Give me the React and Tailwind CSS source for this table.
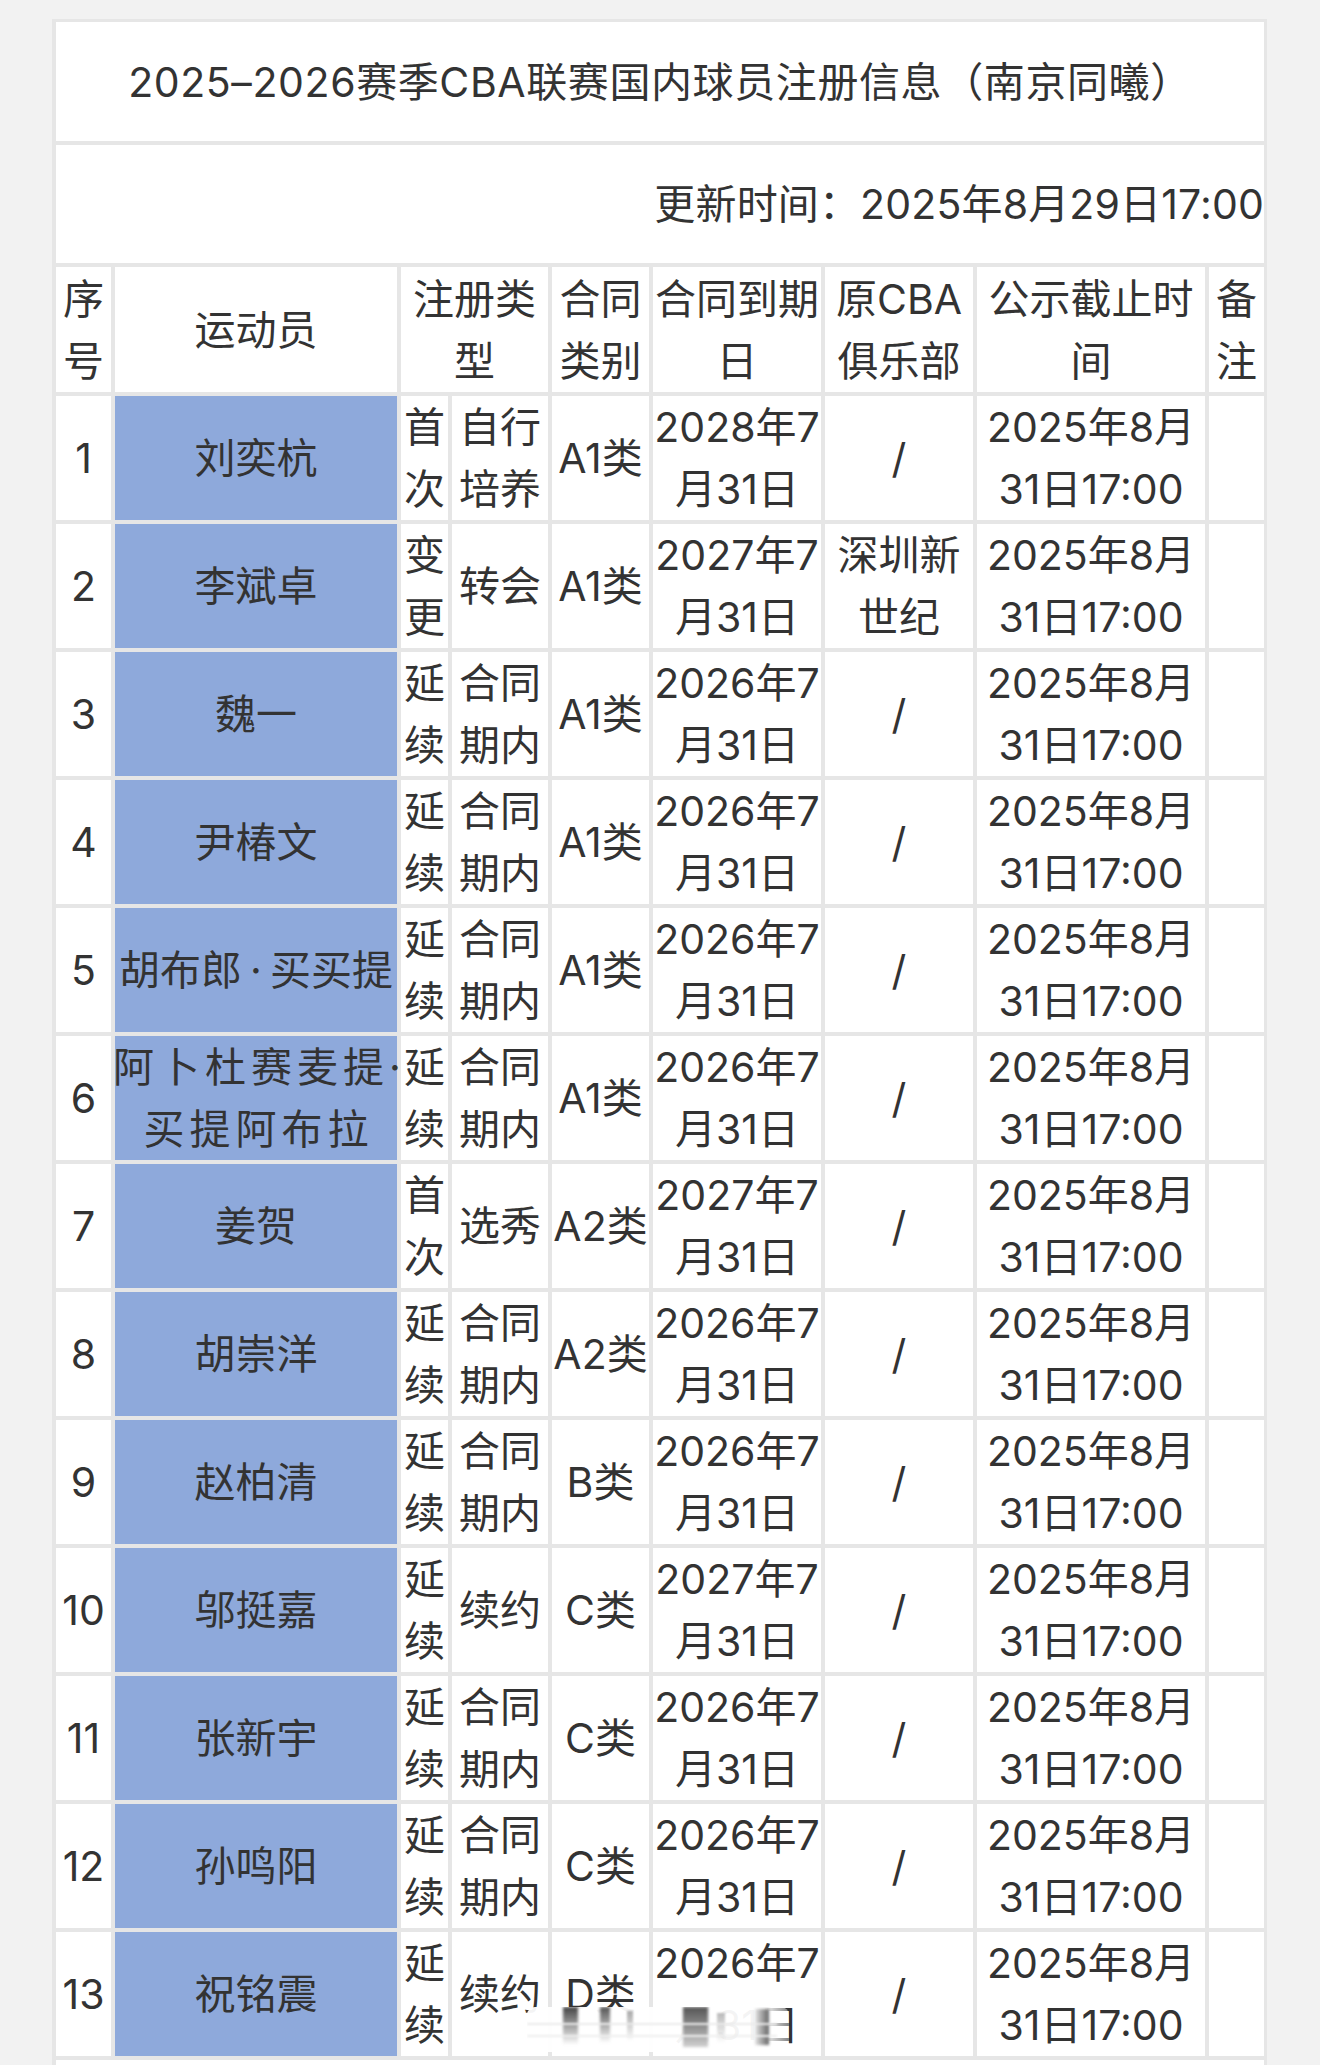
import React from "react";

const GRID =
  "grid grid-cols-[55px_282px_47px_96px_97px_168px_148px_228px_55px] gap-[4px]";

const D1 = ["2025年8月", "31日17:00"];

const rows = [
  { n: "1", name: ["刘奕杭"], a: ["首", "次"], b: ["自行", "培养"], c: "A1类", d: ["2028年7", "月31日"], e: ["/"] },
  { n: "2", name: ["李斌卓"], a: ["变", "更"], b: ["转会"], c: "A1类", d: ["2027年7", "月31日"], e: ["深圳新", "世纪"] },
  { n: "3", name: ["魏一"], a: ["延", "续"], b: ["合同", "期内"], c: "A1类", d: ["2026年7", "月31日"], e: ["/"] },
  { n: "4", name: ["尹椿文"], a: ["延", "续"], b: ["合同", "期内"], c: "A1类", d: ["2026年7", "月31日"], e: ["/"] },
  { n: "5", name: "dot5", a: ["延", "续"], b: ["合同", "期内"], c: "A1类", d: ["2026年7", "月31日"], e: ["/"] },
  { n: "6", name: "dot6", a: ["延", "续"], b: ["合同", "期内"], c: "A1类", d: ["2026年7", "月31日"], e: ["/"] },
  { n: "7", name: ["姜贺"], a: ["首", "次"], b: ["选秀"], c: "A2类", d: ["2027年7", "月31日"], e: ["/"] },
  { n: "8", name: ["胡崇洋"], a: ["延", "续"], b: ["合同", "期内"], c: "A2类", d: ["2026年7", "月31日"], e: ["/"] },
  { n: "9", name: ["赵柏清"], a: ["延", "续"], b: ["合同", "期内"], c: "B类", d: ["2026年7", "月31日"], e: ["/"] },
  { n: "10", name: ["邬挺嘉"], a: ["延", "续"], b: ["续约"], c: "C类", d: ["2027年7", "月31日"], e: ["/"] },
  { n: "11", name: ["张新宇"], a: ["延", "续"], b: ["合同", "期内"], c: "C类", d: ["2026年7", "月31日"], e: ["/"] },
  { n: "12", name: ["孙鸣阳"], a: ["延", "续"], b: ["合同", "期内"], c: "C类", d: ["2026年7", "月31日"], e: ["/"] },
  { n: "13", name: ["祝铭震"], a: ["延", "续"], b: ["续约"], c: "D类", d: ["2026年7", "月31日"], e: ["/"] },
];

function Cell({ lines, className = "" }) {
  const arr = Array.isArray(lines) ? lines : [lines];
  return (
    <div
      className={
        "flex flex-col items-center justify-center text-center whitespace-nowrap bg-white " +
        className
      }
    >
      {arr.map((l, i) => (
        <span key={i}>{l}</span>
      ))}
    </div>
  );
}

function NameCell({ name }) {
  if (name === "dot5") {
    return (
      <div className="flex items-center justify-center whitespace-nowrap bg-[#8ea9db]">
        <span>
          胡布郎<span className="inline-block w-[28px] text-center">·</span>买买提
        </span>
      </div>
    );
  }
  if (name === "dot6") {
    return (
      <div className="flex flex-col items-center justify-center whitespace-nowrap bg-[#8ea9db] tracking-[5px]">
        <span className="pl-[2px]">
          阿卜杜赛麦提<span className="tracking-normal">·</span>
        </span>
        <span className="pl-[5px]">买提阿布拉</span>
      </div>
    );
  }
  return <Cell lines={name} className="!bg-[#8ea9db]" />;
}

export default function App() {
  return (
    <div className="relative h-[2065px] overflow-hidden bg-[#f2f2f2] pt-[19px] pl-[52px] text-[41px] leading-[62px] text-[#333333] [font-family:Inter,'Noto_Sans_CJK_SC',sans-serif]">
      <div className="w-[1215px] bg-[#e6e6e6] pt-[3px] pl-[4px] pr-[3px] pb-[3px]">
        <div className={GRID}>
          <div className="col-span-9 flex h-[119px] items-center justify-center bg-white whitespace-nowrap tracking-[0.6px]">
            2025–2026赛季CBA联赛国内球员注册信息（南京同曦）
          </div>
          <div className="col-span-9 flex h-[118px] items-center justify-end bg-white whitespace-nowrap tracking-[0.15px]">
            更新时间：2025年8月29日17:00
          </div>

          <Cell lines={["序", "号"]} className="h-[125px]" />
          <Cell lines={["运动员"]} />
          <Cell lines={["注册类", "型"]} className="col-span-2" />
          <Cell lines={["合同", "类别"]} />
          <Cell lines={["合同到期", "日"]} />
          <Cell lines={["原CBA", "俱乐部"]} />
          <Cell lines={["公示截止时", "间"]} />
          <Cell lines={["备", "注"]} />

          {rows.map((r) => (
            <React.Fragment key={r.n}>
              <Cell lines={[r.n]} className="h-[124px]" />
              <NameCell name={r.name} />
              <Cell lines={r.a} />
              <Cell lines={r.b} />
              <Cell lines={[r.c]} />
              <Cell lines={r.d} />
              <Cell lines={r.e} />
              <Cell lines={D1} />
              <Cell lines={[""]} />
            </React.Fragment>
          ))}

          <div className="col-span-9 h-[124px] bg-white" />
        </div>
      </div>

      {/* blurred watermark */}
      <div className="absolute left-[527px] top-[2007px] h-[45px] w-[262px] overflow-hidden rounded-[8px]">
        <div className="absolute left-0 top-0 h-full w-[240px] bg-white/95" />
        <div className="absolute left-[240px] top-0 h-full w-[22px] bg-gradient-to-r from-white/90 to-white/40" />
        <div className="absolute left-[36px] top-0 h-[38px] w-[15px] bg-gradient-to-b from-[#444] to-transparent blur-[1.5px]" />
        <div className="absolute left-[73px] top-0 h-[36px] w-[10px] bg-gradient-to-b from-[#555] to-transparent blur-[1.5px]" />
        <div className="absolute left-[100px] top-[4px] h-[30px] w-[6px] bg-gradient-to-b from-[#aaa] to-transparent blur-[1px]" />
        <div className="absolute left-[156px] top-0 h-[40px] w-[25px] bg-gradient-to-b from-[#555] to-[#d0d0d0] blur-[1.5px]" />
        <div className="absolute left-[190px] top-[6px] h-[30px] w-[8px] bg-gradient-to-b from-[#bbb] to-transparent blur-[1px]" />
        <div className="absolute left-[228px] top-[2px] h-[36px] w-[14px] bg-gradient-to-r from-[#e5e5e5] to-[#666] blur-[1.5px]" />
        <div className="absolute left-0 top-[16px] h-[2px] w-[250px] bg-[#ebebeb] blur-[1px]" />
        <div className="absolute left-0 top-[28px] h-[2px] w-[250px] bg-[#eeeeee] blur-[1px]" />
      </div>
    </div>
  );
}
